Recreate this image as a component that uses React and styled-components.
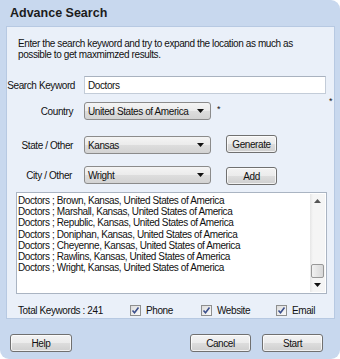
import React from 'react';
import styled, { createGlobalStyle } from 'styled-components';

const GlobalStyle = createGlobalStyle`
  html, body {
    margin: 0;
    padding: 0;
    background: #ffffff;
  }
`;

const Window = styled.div`
  width: 340px;
  height: 359px;
  box-sizing: border-box;
  background: #c8d8ee;
  border-radius: 0 9px 9px 9px;
  display: flex;
  flex-direction: column;
  overflow: hidden;
  font-family: "Liberation Sans", Arial, sans-serif;
  font-size: 10px;
  letter-spacing: -0.4px;
  color: #111;
`;

const TitleBar = styled.div`
  height: 26px;
  display: flex;
  align-items: center;
  padding-left: 10px;
  font-size: 12.5px;
  font-weight: bold;
  letter-spacing: 0;
  color: #1c1c1c;
`;

const Panel = styled.div`
  margin: 0 5px 0 6px;
  background: #eaf0f9;
  border: 1px solid #b7c9e2;
  display: flex;
  flex-direction: column;
`;

const Description = styled.p`
  margin: 11px 0 0 11px;
  line-height: 11px;
  width: 285px;
`;

const FormRow = styled.div`
  display: flex;
  align-items: center;
  height: 18px;
  margin-top: ${p => p.$mt}px;
`;

const Label = styled.div`
  width: 77px;
  box-sizing: border-box;
  padding-right: ${p => p.$pr || 11}px;
  text-align: right;
  white-space: nowrap;
  flex-shrink: 0;
`;

const TextInput = styled.div`
  width: 242px;
  height: 18px;
  box-sizing: border-box;
  background: #fff;
  border: 1px solid #c3ccd8;
  border-top-color: #a9b2bf;
  padding-left: 3px;
  display: flex;
  align-items: center;
`;

const Mark = styled.span`
  font-size: 9px;
  line-height: 9px;
  margin-left: ${p => p.$ml}px;
  align-self: ${p => p.$self || 'center'};
  transform: translateY(${p => p.$dy || 0}px);
`;

const Select = styled.div`
  width: 127px;
  height: 18px;
  box-sizing: border-box;
  border: 1px solid #8b8b8b;
  border-radius: 3px;
  background: linear-gradient(#f4f4f4, #ebebeb 50%, #dddddd 51%, #d3d3d3);
  display: flex;
  align-items: center;
  justify-content: space-between;
  padding: 0 6px 0 3px;
  flex-shrink: 0;
`;

const Button = styled.div`
  width: ${p => p.$w}px;
  height: ${p => p.$h || 18}px;
  margin-left: ${p => p.$ml || 0}px;
  margin-top: ${p => p.$mt || 0}px;
  box-sizing: border-box;
  border: 1px solid #707070;
  border-radius: 3px;
  background: linear-gradient(#f3f3f3, #ebebeb 50%, #dddddd 51%, #cfcfcf);
  box-shadow: inset 0 0 0 1px rgba(255, 255, 255, 0.7);
  display: flex;
  align-items: center;
  justify-content: center;
  flex-shrink: 0;
`;

const ListBox = styled.div`
  margin: 8px 0 0 9px;
  width: 311px;
  height: 102px;
  box-sizing: border-box;
  background: #fff;
  border: 1px solid #aab4c2;
  display: flex;
`;

const ListItems = styled.div`
  flex: 1;
  padding: 2px 0 0 1px;
  line-height: 11.2px;
`;

const ScrollBar = styled.div`
  width: 15px;
  margin: 1px 1px 1px 0;
  background: linear-gradient(90deg, #e6e6e6, #f5f5f5 20%, #f5f5f5);
  display: flex;
  flex-direction: column;
  align-items: center;
`;

const ScrollArrow = styled.div`
  height: 14px;
  width: 100%;
  display: flex;
  align-items: center;
  justify-content: center;
`;

const Track = styled.div`
  flex: 1;
  width: 100%;
  display: flex;
  flex-direction: column;
  justify-content: flex-end;
  align-items: center;
`;

const Thumb = styled.div`
  width: 13px;
  height: 14px;
  box-sizing: border-box;
  border: 1px solid #989898;
  border-radius: 2px;
  background: linear-gradient(90deg, #f2f2f2, #e4e4e4 50%, #d8d8d8);
`;

const OptionRow = styled.div`
  display: grid;
  grid-template-columns: 112px 71px 75px auto;
  align-items: center;
  height: 16px;
  margin: 8px 0 0 11px;
`;

const CheckItem = styled.div`
  display: flex;
  align-items: center;
  gap: 5px;
`;

const Box = styled.div`
  width: 11px;
  height: 11px;
  box-sizing: border-box;
  border: 1px solid #8e8f8f;
  background: linear-gradient(135deg, #dcdcdc, #fbfbfb);
  display: flex;
  align-items: center;
  justify-content: center;
`;

const Footer = styled.div`
  flex: 1;
  display: flex;
  align-items: flex-start;
  padding: 15px 17px 0 10px;
  gap: 11px;
`;

const Spacer = styled.div`
  flex: 1;
`;

const Arrow = ({ up }) => (
  <svg width="7" height="4" viewBox="0 0 7 4">
    <polygon points={up ? '0,4 7,4 3.5,0' : '0,0 7,0 3.5,4'} fill={up ? '#555' : '#111'} />
  </svg>
);

const Check = () => (
  <svg width="9" height="9" viewBox="0 0 9 9">
    <path d="M1.5 4.5 L3.5 6.8 L7.5 1.5" stroke="#3b4f8c" strokeWidth="1.6" fill="none" />
  </svg>
);

const results = ['Brown', 'Marshall', 'Republic', 'Doniphan', 'Cheyenne', 'Rawlins', 'Wright'];

export default function App() {
  return (
    <>
      <GlobalStyle />
      <Window>
        <TitleBar>Advance Search</TitleBar>
        <Panel>
          <Description>
            Enter the search keyword and try to expand the location as much as possible to get maxmimzed results.
          </Description>

          <FormRow $mt={16}>
            <Label $pr={9}>Search Keyword</Label>
            <TextInput>Doctors</TextInput>
            <Mark $ml={3} $self="flex-end" $dy={12}>*</Mark>
          </FormRow>

          <FormRow $mt={8}>
            <Label>Country</Label>
            <Select>
              United States of America
              <Arrow />
            </Select>
            <Mark $ml={6} $dy={-2}>*</Mark>
          </FormRow>

          <FormRow $mt={16}>
            <Label>State / Other</Label>
            <Select>
              Kansas
              <Arrow />
            </Select>
            <Button $w={51} $ml={15} $mt={-2}>Generate</Button>
          </FormRow>

          <FormRow $mt={12}>
            <Label $pr={12}>City / Other</Label>
            <Select>
              Wright
              <Arrow />
            </Select>
            <Button $w={51} $ml={15} $mt={2}>Add</Button>
          </FormRow>

          <ListBox>
            <ListItems>
              {results.map(city => (
                <div key={city}>Doctors ; {city}, Kansas, United States of America</div>
              ))}
            </ListItems>
            <ScrollBar>
              <ScrollArrow><Arrow up /></ScrollArrow>
              <Track><Thumb /></Track>
              <ScrollArrow><Arrow /></ScrollArrow>
            </ScrollBar>
          </ListBox>

          <OptionRow>
            <span>Total Keywords : 241</span>
            {['Phone', 'Website', 'Email'].map(name => (
              <CheckItem key={name}>
                <Box><Check /></Box>
                {name}
              </CheckItem>
            ))}
          </OptionRow>
        </Panel>

        <Footer>
          <Button $w={62}>Help</Button>
          <Spacer />
          <Button $w={61}>Cancel</Button>
          <Button $w={61}>Start</Button>
        </Footer>
      </Window>
    </>
  );
}
